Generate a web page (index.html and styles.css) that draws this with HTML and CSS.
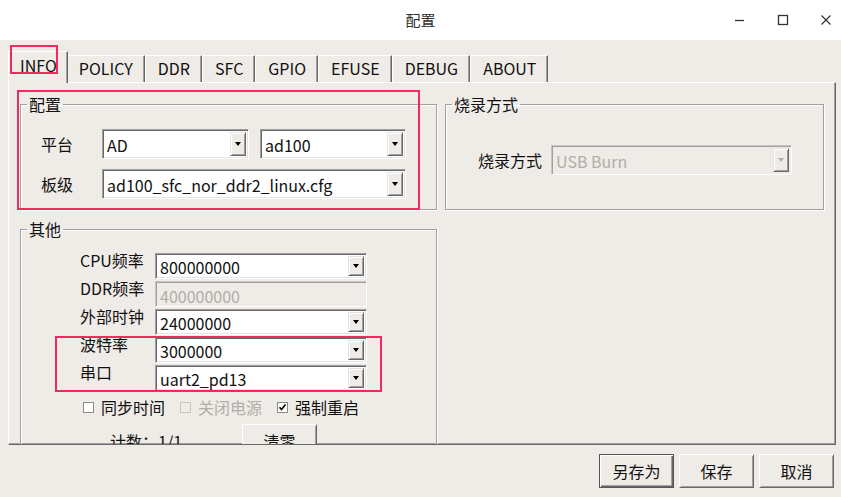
FILE: index.html
```html
<!DOCTYPE html>
<html lang="zh-CN">
<head>
  <meta charset="UTF-8" />
  <title>配置</title>
  <link rel="stylesheet" href="styles.css">
</head>
<body>

<!-- 标题栏 -->
<header class="titlebar">
  <div></div>
  <div class="title">配置</div>
  <div class="win-controls">
    <svg width="12" height="12" viewBox="0 0 12 12"><path d="M1 6.5h9" stroke="#333" stroke-width="1.3"/></svg>
    <svg width="12" height="12" viewBox="0 0 12 12"><rect x="1.5" y="1.5" width="9" height="9" fill="none" stroke="#333" stroke-width="1.3"/></svg>
    <svg width="12" height="12" viewBox="0 0 12 12"><path d="M1.5 1.5l9 9M10.5 1.5l-9 9" stroke="#333" stroke-width="1.2"/></svg>
  </div>
</header>

<div class="window">
  <!-- 标签页 -->
  <div class="tabbar">
    <div class="tab active">INFO<span class="mark mark-tab"></span></div>
    <div class="tab">POLICY</div>
    <div class="tab">DDR</div>
    <div class="tab">SFC</div>
    <div class="tab">GPIO</div>
    <div class="tab">EFUSE</div>
    <div class="tab">DEBUG</div>
    <div class="tab">ABOUT</div>
  </div>

  <div class="panel">
    <fieldset class="group">
      <legend>配置</legend>
      <span class="mark mark-config"></span>
      <div class="config-grid">
        <label>平台</label>
        <div class="combo"><span class="value">AD</span><span class="arrow"></span></div>
        <div class="combo"><span class="value">ad100</span><span class="arrow"></span></div>
        <label>板级</label>
        <div class="combo wide"><span class="value">ad100_sfc_nor_ddr2_linux.cfg</span><span class="arrow"></span></div>
      </div>
    </fieldset>

    <fieldset class="group">
      <legend>烧录方式</legend>
      <div class="burn-row">
        <label>烧录方式</label>
        <div class="combo disabled"><span class="value">USB Burn</span><span class="arrow"></span></div>
      </div>
    </fieldset>

    <fieldset class="group group-other">
      <legend>其他</legend>
      <span class="mark mark-uart"></span>
      <div class="other-body">
        <div class="other-grid">
          <label>CPU频率</label>
          <div class="combo"><span class="value">800000000</span><span class="arrow"></span></div>
          <label>DDR频率</label>
          <div class="lineedit disabled">400000000</div>
          <label>外部时钟</label>
          <div class="combo"><span class="value">24000000</span><span class="arrow"></span></div>
          <label>波特率</label>
          <div class="combo"><span class="value">3000000</span><span class="arrow"></span></div>
          <label>串口</label>
          <div class="combo"><span class="value">uart2_pd13</span><span class="arrow"></span></div>
        </div>
        <div class="checks">
          <div class="check"><span class="box"></span>同步时间</div>
          <div class="check disabled"><span class="box"></span>关闭电源</div>
          <div class="check"><span class="box"><svg width="9" height="9" viewBox="0 0 9 9"><path d="M1.5 4.2l2 2.2 4-5" fill="none" stroke="#000" stroke-width="1.6"/></svg></span>强制重启</div>
        </div>
        <div class="counter">
          <span class="count-text">计数：1/1</span>
          <button class="btn">清零</button>
        </div>
      </div>
    </fieldset>
  </div>

  <div class="actions">
    <button class="btn default">另存为</button>
    <button class="btn">保存</button>
    <button class="btn">取消</button>
  </div>
</div>

</body>
</html>
```

FILE: styles.css
```css
body {
  margin: 0;
  font-family: 'Noto Sans CJK SC', 'Noto Sans', sans-serif;
  font-size: 16px;
  line-height: 22px;
  color: #111;
  background-color: #efebe7;
  width: 841px;
  height: 497px;
  overflow: hidden;
}

/* 标题栏 */
.titlebar {
  height: 40px;
  background-color: #fff;
  display: grid;
  grid-template-columns: 1fr auto 1fr;
  align-items: center;
}

.title {
  font-size: 15px;
  color: #2e2e2e;
}

.win-controls {
  display: flex;
  justify-content: flex-end;
  gap: 31px;
  padding-right: 9px;
}

.window {
  padding: 11px 5px 0 8px;
}

/* 标签页 */
.tabbar {
  display: flex;
  align-items: flex-end;
  height: 31px;
  padding-left: 2px;
  position: relative;
  z-index: 2;
}

.tab {
  height: 27px;
  box-sizing: border-box;
  padding: 0 11px 2px 12px;
  display: flex;
  align-items: center;
  border-top: 1px solid #fff;
  border-left: 1px solid #fff;
  border-right: 1px solid #696969;
  box-shadow: inset -1px 0 #a0a0a0;
  line-height: 1;
}

.tab.active {
  height: 32px;
  margin: 0 -2px -1px -2px;
  padding: 0 10px 6px 11px;
  background-color: #efebe7;
  position: relative;
}

.mark {
  position: absolute;
  border: 2px solid #f5295b;
  pointer-events: none;
}

.mark-tab {
  left: 1px;
  top: -7px;
  width: 44px;
  height: 25px;
}

/* 面板 */
.panel {
  height: 363px;
  box-sizing: border-box;
  border-top: 1px solid #fff;
  border-left: 1px solid #fff;
  border-right: 1px solid #696969;
  border-bottom: 1px solid #696969;
  box-shadow: inset -1px -1px #a0a0a0;
  overflow: hidden;
  display: grid;
  grid-template-columns: 417px 379px;
  align-content: start;
  column-gap: 8px;
  row-gap: 9px;
  padding: 11px 0 0 11px;
}

.group {
  margin: 0;
  padding: 0;
  min-width: 0;
  border: 1px solid #a0a0a0;
  box-shadow: 1px 1px 0 #fff, inset 1px 1px 0 #fff;
  position: relative;
}

.group legend {
  padding: 0 2px;
  margin-left: 6px;
  line-height: 20px;
}

.mark-config {
  left: -4px;
  top: -24px;
  width: 399px;
  height: 116px;
}

.config-grid {
  display: grid;
  grid-template-columns: 50px 147px 146px;
  grid-auto-rows: 30px;
  column-gap: 11px;
  row-gap: 10px;
  align-items: center;
  padding: 15px 0 10px 20px;
}

.config-grid .wide {
  grid-column: 2 / 4;
}

.burn-row {
  display: flex;
  align-items: center;
  gap: 9px;
  padding: 31px 0 0 32px;
}

.burn-row .combo {
  width: 241px;
  height: 30px;
}

.group-other {
  grid-column: 1 / 2;
}

.other-body {
  padding: 14px 0 40px 59px;
}

.mark-uart {
  left: 34px;
  top: 97px;
  width: 323px;
  height: 52px;
}

.other-grid {
  display: grid;
  grid-template-columns: 75px 212px;
  grid-auto-rows: 26px;
  row-gap: 2px;
  align-items: center;
}

.other-grid label {
  margin-top: -12px;
}

/* 下拉框 */
.combo,
.lineedit {
  height: 100%;
  box-sizing: border-box;
  display: flex;
  align-items: center;
  background-color: #fff;
  border: 1px solid;
  border-color: #a0a0a0 #fff #fff #a0a0a0;
  box-shadow: inset 1px 1px #696969, inset -1px -1px #e3e3e3;
  padding: 2px;
}

.combo .value {
  flex: 1;
  padding: 1px 0 0 2px;
  white-space: nowrap;
  overflow: hidden;
}

.arrow {
  width: 16px;
  align-self: stretch;
  box-sizing: border-box;
  background-color: #efebe7;
  border: 1px solid;
  border-color: #e3e3e3 #696969 #696969 #e3e3e3;
  box-shadow: inset 1px 1px #fff, inset -1px -1px #a0a0a0;
  display: flex;
  align-items: center;
  justify-content: center;
}

.arrow::after {
  content: '';
  border-left: 3.5px solid transparent;
  border-right: 3.5px solid transparent;
  border-top: 4px solid #000;
}

.lineedit {
  padding: 3px 0 0 4px;
}

.disabled {
  color: #b2aea9;
}

.combo.disabled,
.lineedit.disabled {
  background-color: #efebe7;
  border-color: #c9c6c2 #fff #fff #c9c6c2;
  box-shadow: inset 1px 1px #a0a0a0, inset -1px -1px #efebe7;
}

.combo.disabled .arrow::after {
  border-top-color: #b2aea9;
}

/* 复选框 */
.checks {
  display: flex;
  align-items: center;
  gap: 15px;
  margin: 6px 0 0 3px;
  height: 20px;
}

.check {
  display: flex;
  align-items: center;
  gap: 7px;
}

.box {
  width: 11px;
  height: 11px;
  box-sizing: border-box;
  background-color: #fff;
  border: 1px solid #8a8a8a;
  display: flex;
  align-items: center;
  justify-content: center;
}

.check.disabled .box {
  background-color: #efebe7;
  border-color: #c9c6c2;
}

.counter {
  display: flex;
  align-items: flex-start;
  margin: 7px 0 0 30px;
}

.count-text {
  width: 132px;
  padding-top: 6px;
}

/* 按钮 */
.btn {
  font-family: inherit;
  font-size: 16px;
  color: #111;
  width: 75px;
  height: 34px;
  padding: 0;
  background-color: #efebe7;
  border: 1px solid;
  border-color: #fff #696969 #696969 #fff;
  box-shadow: inset 1px 1px #efebe7, inset -1px -1px #a0a0a0;
}

.btn.default {
  border-color: #555;
  box-shadow: inset 1px 1px #fff, inset -1px -1px #696969, inset -2px -2px #a0a0a0;
}

.actions {
  display: flex;
  justify-content: flex-end;
  gap: 5px;
  margin-top: 9px;
  padding-right: 2px;
}
```
